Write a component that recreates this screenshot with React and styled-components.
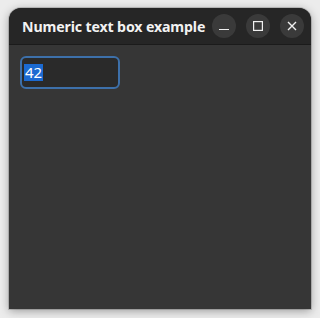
import styled, { createGlobalStyle } from "styled-components";

const GlobalStyle = createGlobalStyle`
    body {
        margin: 0;
        background: #ececec;
        font-family: "Noto Sans", "Open Sans", sans-serif;
    }
`;

const Page = styled.div`
    padding: 8px 9px;
    height: 318px;
    box-sizing: border-box;
`;

const Window = styled.div`
    width: 302px;
    height: 301px;
    display: flex;
    flex-direction: column;
    border-radius: 12px 12px 0 0;
    overflow: hidden;
    background: #363636;
    box-shadow: 0 2px 10px rgba(0, 0, 0, 0.35), 0 0 0 1px rgba(0, 0, 0, 0.15);
`;

const TitleBar = styled.div`
    height: 37px;
    flex-shrink: 0;
    display: flex;
    align-items: center;
    padding: 0 6px 0 13px;
    background: #262626;
    border-bottom: 1px solid #1b1b1b;
    box-sizing: border-box;
`;

const Title = styled.div`
    flex: 1;
    color: #f2f2f2;
    font-weight: 700;
    font-size: 14.2px;
    white-space: nowrap;
    letter-spacing: -0.15px;
`;

const Controls = styled.div`
    display: flex;
    gap: 10px;
    margin-right: 1px;
`;

const CtrlButton = styled.div`
    width: 24px;
    height: 24px;
    border-radius: 50%;
    background: #3a3a3a;
    display: flex;
    align-items: center;
    justify-content: center;
    color: #f0f0f0;
`;

const Content = styled.div`
    flex: 1;
    padding: 11px 11px;
`;

const NumberBox = styled.div`
    width: 100px;
    height: 33px;
    box-sizing: border-box;
    border: 2px solid #3d70aa;
    border-radius: 6px;
    background: #2a2a2a;
    display: flex;
    align-items: center;
    padding: 0 0 0 2px;
`;

const Selected = styled.span`
    background: #1b6ad1;
    color: #ffffff;
    font-size: 15px;
    line-height: 17px;
    padding: 0 1px;
`;

export default function App() {
    return (
        <Page>
            <GlobalStyle />
            <Window>
                <TitleBar>
                    <Title>Numeric text box example</Title>
                    <Controls>
                        <CtrlButton>
                            <svg width="10" height="10" viewBox="0 0 10 10">
                                <path d="M0 8.5h10" stroke="currentColor" strokeWidth="1.2" />
                            </svg>
                        </CtrlButton>
                        <CtrlButton>
                            <svg width="10" height="10" viewBox="0 0 10 10">
                                <rect x="0.6" y="0.6" width="8.8" height="8.8" fill="none" stroke="currentColor" strokeWidth="1.2" />
                            </svg>
                        </CtrlButton>
                        <CtrlButton>
                            <svg width="10" height="10" viewBox="0 0 10 10">
                                <path d="M1 1l8 8M9 1l-8 8" stroke="currentColor" strokeWidth="1.4" />
                            </svg>
                        </CtrlButton>
                    </Controls>
                </TitleBar>
                <Content>
                    <NumberBox>
                        <Selected>42</Selected>
                    </NumberBox>
                </Content>
            </Window>
        </Page>
    );
}
